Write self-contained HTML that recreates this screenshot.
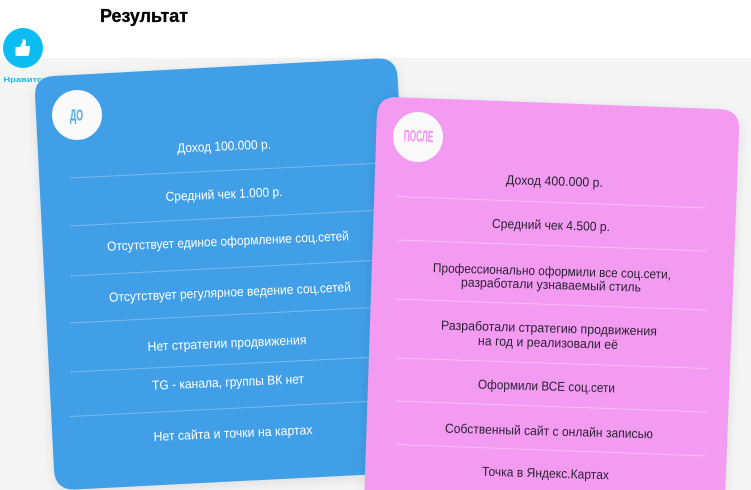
<!DOCTYPE html>
<html lang="ru">
<head>
<meta charset="utf-8">
<title>Результат</title>
<style>
html,body{margin:0;padding:0;background:#fff;width:751px;height:490px;overflow:hidden}
svg{display:block}
text{font-family:"Liberation Sans",sans-serif}
.b{fill:#fff;font-size:13px;text-anchor:middle}
.p{fill:#2b2233;font-size:13px;text-anchor:middle}
.lb{stroke:#fff;stroke-opacity:.3;stroke-width:.9}
.lp{stroke:#fff;stroke-opacity:.35;stroke-width:.9}
</style>
</head>
<body>
<svg width="751" height="490" viewBox="0 0 751 490" xmlns="http://www.w3.org/2000/svg">
<defs>
<filter id="s" x="-10%" y="-10%" width="120%" height="120%"><feDropShadow dx="0" dy="3" stdDeviation="6" flood-color="#000" flood-opacity=".1"/></filter>
</defs>
<rect x="0" y="58" width="751" height="432" fill="#f5f5f5"/>
<text x="100" y="22" font-size="18" font-weight="700" fill="#000" stroke="#000" stroke-width=".3" textLength="88" lengthAdjust="spacingAndGlyphs">Результат</text>

<circle cx="23" cy="48" r="20" fill="#0dbdf2"/>
<path d="M15.500 47H20L22.500 42V39.500Q25.500 38.500 26 41.500L25.500 46H29Q30.500 46 30 48L29 54.500Q28.500 56 27 56H17Q15.500 56 15.500 54.500Z" fill="#fff"/>
<text x="3.500" y="82" font-size="7.500" font-weight="700" fill="#12bcf0" textLength="44" lengthAdjust="spacingAndGlyphs">Нравится</text>

<path d="M35.100 97Q34 77 54 76L376.500 58.500Q396.500 57.400 397.600 77.400L420 472L75 489.500Q55 490 54 470Z" fill="#3f9fe7" filter="url(#s)"/>
<circle cx="77" cy="115" r="25" fill="#fafafa"/>
<text x="76.500" y="120.500" font-size="16" font-weight="700" fill="#5aaeea" stroke="#5aaeea" stroke-width=".3" text-anchor="middle" textLength="13" lengthAdjust="spacingAndGlyphs">ДО</text>

<g class="lb">
<line x1="70" y1="178" x2="382" y2="163"/>
<line x1="70" y1="226" x2="382" y2="210"/>
<line x1="70" y1="276" x2="382" y2="260"/>
<line x1="70" y1="323" x2="382" y2="307"/>
<line x1="70" y1="372" x2="378" y2="357"/>
<line x1="70" y1="416.500" x2="378" y2="401"/>
</g>
<text class="b" x="224" y="150.500" textLength="94" lengthAdjust="spacingAndGlyphs" transform="rotate(-2.500 224 146)">Доход 100.000 р.</text>
<text class="b" x="224" y="198.500" textLength="117" lengthAdjust="spacingAndGlyphs" transform="rotate(-2.500 224 194)">Средний чек 1.000 р.</text>
<text class="b" x="228" y="245.500" textLength="242" lengthAdjust="spacingAndGlyphs" transform="rotate(-2.500 228 241)">Отсутствует единое оформление соц.сетей</text>
<text class="b" x="230" y="296.500" textLength="242" lengthAdjust="spacingAndGlyphs" transform="rotate(-2.500 230 292)">Отсутствует регулярное ведение соц.сетей</text>
<text class="b" x="227" y="347.500" textLength="159" lengthAdjust="spacingAndGlyphs" transform="rotate(-2.500 227 343)">Нет стратегии продвижения</text>
<text class="b" x="228" y="386.500" textLength="152" lengthAdjust="spacingAndGlyphs" transform="rotate(-2.500 228 382)">TG - канала, группы ВК нет</text>
<text class="b" x="233" y="437.500" textLength="159" lengthAdjust="spacingAndGlyphs" transform="rotate(-2.500 233 433)">Нет сайта и точки на картах</text>

<path d="M376.800 116.500Q377.500 96.500 397.500 97.200L719.800 109.100Q739.800 109.800 739.100 129.800L725.400 490H364.500Z" fill="#f29bf0" filter="url(#s)"/>
<circle cx="418" cy="137" r="25" fill="#fafafa"/>
<text x="418.500" y="141.500" font-size="16" font-weight="700" fill="#f29bf0" stroke="#f29bf0" stroke-width=".3" text-anchor="middle" textLength="29.500" lengthAdjust="spacingAndGlyphs" transform="rotate(2 418 137)">ПОСЛЕ</text>

<g class="lp">
<line x1="396" y1="196.500" x2="707" y2="208"/>
<line x1="396" y1="240" x2="707" y2="251"/>
<line x1="396" y1="299" x2="707" y2="310"/>
<line x1="396" y1="358" x2="707" y2="368.500"/>
<line x1="396" y1="401" x2="707" y2="412"/>
<line x1="396" y1="444.500" x2="707" y2="456"/>
</g>
<text class="p" x="554.500" y="185.500" textLength="97" lengthAdjust="spacingAndGlyphs" transform="rotate(1.600 554.500 181)">Доход 400.000 р.</text>
<text class="p" x="551" y="229.500" textLength="118" lengthAdjust="spacingAndGlyphs" transform="rotate(1.600 551 225)">Средний чек 4.500 р.</text>
<text class="p" x="552" y="275.500" textLength="238" lengthAdjust="spacingAndGlyphs" transform="rotate(1.600 552 271)">Профессионально оформили все соц.сети,</text>
<text class="p" x="551" y="289" textLength="180" lengthAdjust="spacingAndGlyphs" transform="rotate(1.600 551 285)">разработали узнаваемый стиль</text>
<text class="p" x="549" y="332.500" textLength="216" lengthAdjust="spacingAndGlyphs" transform="rotate(1.600 549 328)">Разработали стратегию продвижения</text>
<text class="p" x="548" y="347" textLength="140" lengthAdjust="spacingAndGlyphs" transform="rotate(1.600 548 343)">на год и реализовали её</text>
<text class="p" x="546.500" y="390.500" textLength="137" lengthAdjust="spacingAndGlyphs" transform="rotate(1.600 546.500 386)">Оформили ВСЕ соц.сети</text>
<text class="p" x="549" y="435.500" textLength="208" lengthAdjust="spacingAndGlyphs" transform="rotate(1.600 549 431)">Собственный сайт с онлайн записью</text>
<text class="p" x="545.500" y="477.500" textLength="127" lengthAdjust="spacingAndGlyphs" transform="rotate(1.600 545.500 473)">Точка в Яндекс.Картах</text>
</svg>
</body>
</html>
